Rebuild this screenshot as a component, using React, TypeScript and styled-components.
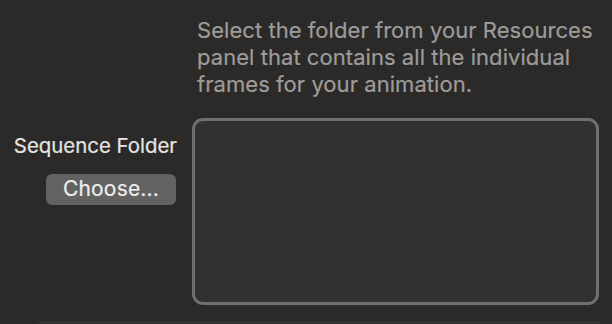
import React from "react";
import styled, {createGlobalStyle} from "styled-components";

const GlobalStyle = createGlobalStyle`
  html, body {
    margin: 0;
    padding: 0;
    background: #2b2a28;
  }

  body {
    width: 612px;
    height: 324px;
    overflow: hidden;
    font-family: Inter, "Liberation Sans", sans-serif;
  }
`

const Panel = styled.div`
  position: relative;
  width: 612px;
  height: 324px;
  box-sizing: border-box;
  display: grid;
  grid-template-columns: 192px 407px;
  grid-template-rows: auto 187px;
  align-content: start;
  row-gap: 20px;
  padding-top: 17px;
`

const Description = styled.p`
  grid-column: 2;
  margin: 0;
  padding-left: 5px;
  font-size: 22px;
  line-height: 27px;
  letter-spacing: 0.05px;
  white-space: nowrap;
  color: #9d9c9b;
  -webkit-text-stroke: 0.2px #9d9c9b;
`

const Side = styled.div`
  display: flex;
  flex-direction: column;
  align-items: flex-end;
  padding-right: 15px;
  padding-top: 16px;
`

const Label = styled.div`
  font-size: 20.4px;
  line-height: 24px;
  color: #e6e6e5;
  -webkit-text-stroke: 0.2px #e6e6e5;
`

const Button = styled.button`
  margin-top: 16px;
  margin-right: 1px;
  width: 130px;
  height: 31px;
  border: none;
  border-radius: 6px;
  background: #626261;
  color: #ededec;
  font-family: inherit;
  font-size: 21px;
  letter-spacing: 0.2px;
  padding: 0 0 2px;
  -webkit-text-stroke: 0.2px #ededec;
`

const Drop = styled.div`
  box-sizing: border-box;
  border: 3px solid #6f6f6e;
  border-radius: 11px;
  background: #323130;
`

const Rule = styled.div`
  position: absolute;
  left: 36px;
  right: 12px;
  bottom: 1px;
  height: 1px;
  background: #3a3938;
`

export default function App() {
    return (
        <>
            <GlobalStyle/>
            <Panel>
                <Description>
                    Select the folder from your Resources<br/>
                    panel that contains all the individual<br/>
                    frames for your animation.
                </Description>
                <Side>
                    <Label>Sequence Folder</Label>
                    <Button>Choose...</Button>
                </Side>
                <Drop/>
                <Rule/>
            </Panel>
        </>
    )
}
